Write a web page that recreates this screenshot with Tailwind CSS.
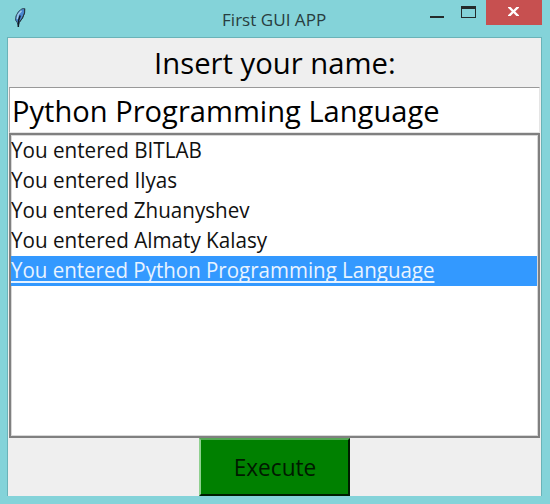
<!DOCTYPE html>
<html lang="en">
<head>
<meta charset="utf-8">
<title>First GUI APP</title>
<script src="https://cdn.jsdelivr.net/npm/@tailwindcss/browser@4"></script>
</head>
<body class="w-[550px] h-[504px] overflow-hidden bg-[#84d3d9] font-['Open_Sans','Noto_Sans',sans-serif] text-black">
<div class="flex h-full flex-col">
  <header class="flex h-[37px] shrink-0 items-start">
    <div class="w-[222px] pl-[14px] pt-[7px]">
      <svg width="13" height="21" viewBox="0 0 13 21">
        <path d="M4.3 18.5L3.2 15.5L1.5 13L2 9L4.5 4.5L8 1.8L10.8 1.5L10.5 6L8.5 11L5.5 15.2Z" fill="#4a86d0" stroke="#35505e" stroke-width="1"/>
        <path d="M3.2 12L4.2 7.5L7.5 3.8" stroke="#a7cdeb" stroke-width="1.4" fill="none"/>
        <path d="M6.2 8.5L4.6 13.5L4.3 20" stroke="#101c28" stroke-width="1.5" fill="none"/>
        <path d="M10.6 2v4L8.5 11L5.5 15" stroke="#26343e" stroke-width="1" fill="none"/>
      </svg>
    </div>
    <h1 class="w-[208px] pt-[8px] text-[17px] leading-[23px] whitespace-nowrap text-[#283d40]"><span class="inline-block origin-left scale-x-[1.005]">First GUI APP</span></h1>
    <svg class="w-[14px]" height="25" viewBox="0 0 14 25"><path d="M0 16h14v2H0z" fill="#242b2b"/></svg>
    <svg class="ml-[17px] w-[15px]" height="25" viewBox="0 0 15 25"><path fill-rule="evenodd" d="M0 6h15v12H0zM1 9v8h13V9z" fill="#242b2b"/></svg>
    <button class="ml-[10px] flex h-[25px] w-[56px] justify-center bg-[#c75050]" aria-label="Close">
      <svg width="56" height="25" viewBox="0 0 56 25"><path d="M22 7h2.6l2.9 3.1L30.4 7H33v.8L29.2 11.5L33 15.2v.8h-2.6l-2.9-3.1L24.600 16H22v-.8l3.8-3.700L22 7.800z" fill="#fff"/></svg>
    </button>
  </header>
  <main class="ml-[7px] flex h-[459px] w-[535px] shrink-0 flex-col border-x border-t border-[#6ab3b8] bg-[#efefef] px-px">
    <label class="block h-[49px] pt-[4px] text-center text-[30px] leading-[42px] whitespace-nowrap"><span class="inline-block scale-x-[.975]">Insert your name:</span></label>
    <div class="h-[46px] shrink-0 border border-t-[#999] border-l-[#aaa] border-r-[#e5e5e5] border-b-[#e3e3e3] bg-white pl-[2px] pt-[2px] text-[30px] leading-[42px] whitespace-nowrap"><span class="inline-block origin-left scale-x-[.97]">Python Programming Language</span></div>
    <ul class="h-[305px] shrink-0 border-2 border-[#808080] bg-white pt-px text-[21px] leading-[28px] whitespace-nowrap shadow-[inset_0_0_0_1px_#d8d8d8]">
      <li class="h-[30px] text-[#111]"><span class="inline-block origin-left scale-x-[.983]">You entered BITLAB</span></li>
      <li class="h-[30px] text-[#111]"><span class="inline-block origin-left scale-x-[.985]">You entered Ilyas</span></li>
      <li class="h-[30px] text-[#111]"><span class="inline-block origin-left scale-x-[.98]">You entered Zhuanyshev</span></li>
      <li class="h-[30px] text-[#111]"><span class="inline-block origin-left scale-x-[.983]">You entered Almaty Kalasy</span></li>
      <li class="mr-px h-[30px] bg-[#3399ff] text-[#e8f3ff]"><span class="inline-block origin-left scale-x-[.976] underline decoration-2 underline-offset-[3px] [text-decoration-skip-ink:none]">You entered Python Programming Language</span></li>
    </ul>
    <button class="mx-auto flex h-[58px] w-[151px] items-center justify-center border-2 border-t-[#54a854] border-l-[#8fd08f] border-r-[#001c00] border-b-[#001c00] bg-[#008000] text-[23px] text-[#001a00]"><span class="inline-block scale-x-[.985]">Execute</span></button>
  </main>
</div>
</body>
</html>
